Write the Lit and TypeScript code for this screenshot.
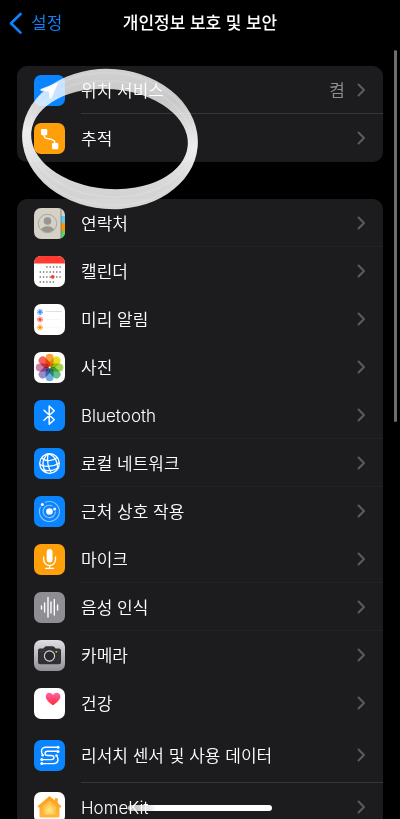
import { LitElement, html, css, svg, nothing } from "lit";
import { customElement } from "lit/decorators.js";

interface Row {
  label: string;
  icon: string;
  value?: string;
  tall?: boolean;
  line?: "strong" | "faint";
}

const locationRows: Row[] = [
  { label: "위치 서비스", icon: "location", value: "켬", line: "strong" },
  { label: "추적", icon: "tracking" },
];

const appRows: Row[] = [
  { label: "연락처", icon: "contacts", line: "faint" },
  { label: "캘린더", icon: "calendar" },
  { label: "미리 알림", icon: "reminders" },
  { label: "사진", icon: "photos" },
  { label: "Bluetooth", icon: "bluetooth", line: "faint" },
  { label: "로컬 네트워크", icon: "network", line: "faint" },
  { label: "근처 상호 작용", icon: "nearby" },
  { label: "마이크", icon: "mic", line: "faint" },
  { label: "음성 인식", icon: "speech", line: "faint" },
  { label: "카메라", icon: "camera" },
  { label: "건강", icon: "health" },
  { label: "리서치 센서 및 사용 데이터", icon: "research", tall: true, line: "strong" },
  { label: "HomeKit", icon: "home" },
];

const petals = ["#f9a03a", "#e8dc1e", "#a9d34e", "#62c08a", "#6cacdf", "#9c8bc8", "#cf7eac", "#f4625a"];

const tile = (fill: string) => svg`<rect width="31" height="31" rx="7" fill=${fill} />`;

const icons: Record<string, unknown> = {
  location: svg`${tile("#0a84ff")}
    <path d="M23.6 8 L7 14.4 Q6.200 15.200 7.200 15.600 L15 16 L16 23 Q16.600 24 17.200 23 Z" fill="#fff" stroke="#fff" stroke-width=".8" stroke-linejoin="round" />`,
  tracking: svg`${tile("#ff9f0a")}
    <path d="M10 9 C10 18 12.500 14.500 16 16 C20.500 17.500 21 17 21 23" fill="none" stroke="#fff" stroke-width="1.500" />
    <rect x="7" y="6" width="6.300" height="6.300" rx="1.300" fill="#fff" />
    <rect x="18" y="20" width="6.300" height="6.300" rx="1.300" fill="#fff" />`,
  contacts: svg`<defs>
      <clipPath id="book"><rect width="31" height="31" rx="7" /></clipPath>
      <clipPath id="face"><circle cx="13.500" cy="15.500" r="9" /></clipPath>
    </defs>
    <g clip-path="url(#book)">
      <rect width="31" height="31" fill="#d5d1c7" />
      <rect x="27" y="8" width="4" height="7" fill="#5ac8fa" />
      <rect x="27" y="15" width="4" height="8" fill="#ff9500" />
      <rect x="27" y="23" width="4" height="8" fill="#4cd964" />
      <path d="M27 0V31" stroke="#77756f" stroke-width=".8" />
      <g clip-path="url(#face)" fill="#999690"><circle cx="13.500" cy="13" r="3.800" /><ellipse cx="13.500" cy="22.500" rx="6.600" ry="4.300" /></g>
      <circle cx="13.500" cy="15.500" r="9.200" fill="none" stroke="#a5a29b" stroke-width=".9" />
    </g>`,
  calendar: svg`${tile("#fff")}
    <path d="M0 7.500V7a7 7 0 0 1 7-7h17a7 7 0 0 1 7 7v.5z" fill="#ff3b30" />
    <g stroke="#222" stroke-width="1.200" stroke-dasharray="1.300 2">
      <path d="M12.300 11H27" /><path d="M5.600 16H27" /><path d="M5.600 21H27" /><path d="M5.600 26H20" />
    </g>
    <circle cx="18.700" cy="20.800" r="1.900" fill="#ff3b30" />`,
  reminders: svg`${tile("#fff")}
    <g fill="none" stroke-width="1" stroke-dasharray="1.600 .6">
      <circle cx="6" cy="8" r="2.600" stroke="#3f9bff" /><circle cx="6" cy="15.500" r="2.600" stroke="#ff6a60" /><circle cx="6" cy="23.300" r="2.600" stroke="#ffad3b" />
    </g>
    <circle cx="6" cy="8" r="1.700" fill="#1684ff" /><circle cx="6" cy="15.500" r="1.700" fill="#ff453a" /><circle cx="6" cy="23.300" r="1.700" fill="#ff9500" />
    <path d="M11.500 7.500H28" stroke="#d8d8d8" stroke-width=".8" /><path d="M11.500 15.500H28M11.500 23.300H28" stroke="#f1f1f1" stroke-width=".6" />`,
  photos: svg`${tile("#fff")}
    <g class="petals">${petals.map(
      (c, i) => svg`<rect x="11.600" y="1.700" width="8" height="13" rx="4" fill=${c} transform=${`rotate(${i * 45} 15.600 15.500)`} />`
    )}</g>`,
  bluetooth: svg`${tile("#0a84ff")}
    <path d="M10 10.300 L20.300 19.800 L15.200 24.300 V6 L20.300 10.800 L10 20.300" fill="none" stroke="#fff" stroke-width="1.500" stroke-linejoin="round" stroke-linecap="round" />`,
  network: svg`${tile("#0a84ff")}
    <g fill="none" stroke="#fff" stroke-width="1.300">
      <circle cx="15.500" cy="15.500" r="9.800" />
      <path d="M14 5.700C7.500 11 7.500 20 13 25M14 5.700C20 7 24 13 23.500 21M14 5.700C13 12 14 20 17.500 25" />
      <path d="M7.500 10C12 14 19 13 23.300 9.500M5.800 16.500C11 19.500 20 18.500 25.200 15M8.300 22C13 23 20 22.500 24 20" />
    </g>`,
  nearby: svg`${tile("#0a84ff")}
    <g fill="none" stroke="#8dc6ff" stroke-width="1.100">
      <path d="M6.600 10.800A10 10 0 1 0 15.500 5.500Q12.800 5.400 10.800 6.600" />
      <path d="M21.500 15.500A6.200 6.200 0 1 1 18.500 10.100" />
    </g>
    <circle cx="15.500" cy="15.500" r="3.300" fill="#fff" /><circle cx="8.300" cy="8.500" r="1.500" fill="#fff" /><circle cx="20.700" cy="13" r="1.500" fill="#fff" />`,
  mic: svg`${tile("#ff9f0a")}
    <rect x="12.700" y="5" width="5.800" height="13.500" rx="2.900" fill="#fff" />
    <path d="M9.700 13V15.500A5.900 5.900 0 0 0 21.500 15.500V13M15.600 21.400V24.300M11.700 24.300H19.500" fill="none" stroke="#fff" stroke-width="1.300" stroke-linecap="round" />`,
  speech: svg`${tile("#8e8e93")}
    <path d="M7.500 14V17M10.600 11V20M14 5.500V25M17 10V21M20.300 7.500V23M23.600 13V18" stroke="#fff" stroke-width="1.400" stroke-linecap="round" />`,
  camera: svg`<defs><linearGradient id="silver" x2="0" y2="1"><stop stop-color="#dfdee4" /><stop offset="1" stop-color="#929197" /></linearGradient></defs>
    ${tile("url(#silver)")}
    <path d="M6 8.500H9.300L11 6.800Q11.500 6.300 12.300 6.300H18.800Q19.500 6.300 20 6.800L21.700 8.500H25Q27 8.500 27 10.500V22.300Q27 24.300 25 24.300H6Q4 24.300 4 22.300V10.500Q4 8.500 6 8.500Z" fill="#303033" />
    <path d="M4 11.300H27" stroke="#48484b" stroke-width=".6" />
    <circle cx="15.500" cy="16" r="5.100" fill="#29292c" stroke="#d6d6da" stroke-width="1.100" /><circle cx="22.300" cy="11.800" r=".9" fill="#ffcc00" />`,
  health: svg`<defs><linearGradient id="heart" x2="0" y2="1"><stop stop-color="#ff61ad" /><stop offset="1" stop-color="#ff2d2d" /></linearGradient></defs>
    ${tile("#fff")}
    <path d="M19 17.200C14.500 14 11.800 11.500 11.800 8.400C11.800 4.400 16.800 3.500 19 7C21.200 3.500 26.300 4.400 26.300 8.400C26.300 11.500 23.500 14 19 17.200Z" fill="url(#heart)" />`,
  research: svg`${tile("#0a84ff")}
    <g fill="none" stroke="#fff" stroke-width="1.400">
      <path d="M23.500 7.300H12Q7.500 7.300 7.500 11Q7.500 13 8.500 14.500" />
      <path d="M23.500 11.300H13.500Q11 11.300 11 13.500Q11 15.500 14 15.500H17Q20 15.500 20 17.500Q20 19.600 17.500 19.600H7.500" />
      <path d="M7.500 23.600H19Q24 23.600 24 19.500Q24 17 22.500 16" />
    </g>
    <g fill="#fff"><circle cx="24" cy="7.300" r="1.500" /><circle cx="24" cy="11.500" r="1.500" /><circle cx="7.800" cy="19.400" r="1.500" /><circle cx="7.800" cy="23.600" r="1.500" /><circle cx="22.500" cy="15.500" r="1.300" /><circle cx="8.700" cy="15.300" r="1.300" /></g>`,
  home: svg`<defs><linearGradient id="house" x2="0" y2="1"><stop stop-color="#ff9d1b" /><stop offset="1" stop-color="#ffb53c" /></linearGradient></defs>
    ${tile("#fff")}
    <path d="M15.500 4L20.800 8.500V6.300H23.800V11L27.500 14.300L26.600 15.600H25.500V24.500Q25.500 25.500 24.500 25.500H6.500Q5.500 25.500 5.500 24.500V15.600H4.400L3.500 14.300Z" fill="url(#house)" />
    <path d="M15.500 8.800L22.300 14.500V22.500H8.700V14.500Z" fill="#ffc04d" /><path d="M15.500 12L19.800 15.700V22.500H11.200V15.700Z" fill="#ffd264" /><path d="M15.500 14.800L17.700 16.800V20.500H13.300V16.800Z" fill="#ffe27c" />`,
};

@customElement("app-root")
export class AppRoot extends LitElement {
  static styles = css`
    :host {
      display: block;
      position: relative;
      height: 100vh;
      overflow: hidden;
      background: #000;
      color: #fff;
      font: 350 17px/24px Inter, "Noto Sans CJK KR", sans-serif;
    }
    .nav {
      display: grid;
      grid-template-columns: 1fr auto 1fr;
      align-items: center;
      height: 46px;
      margin-bottom: 20px;
      padding: 0 8px;
    }
    .title {
      margin: 0;
      font-size: 17px;
      font-weight: 500;
    }
    .back {
      display: flex;
      align-items: center;
      gap: 8px;
      color: #0a84ff;
      text-decoration: none;
    }
    .back-mark {
      width: 15px;
      height: 22px;
    }
    .card {
      margin: 0 17px 37px;
      padding: 0;
      list-style: none;
      border-radius: 10px;
      background: #1c1c1e;
      overflow: hidden;
    }
    .row {
      display: flex;
      align-items: center;
      gap: 16px;
      height: 48px;
      padding-left: 17px;
      color: inherit;
      text-decoration: none;
    }
    .tall {
      height: 56px;
    }
    .icon {
      flex: none;
      width: 31px;
      height: 31px;
    }
    .petals rect {
      mix-blend-mode: multiply;
    }
    .body {
      box-sizing: border-box;
      flex: 1;
      display: flex;
      align-items: center;
      gap: 12px;
      height: 100%;
      padding-right: 17px;
      border-bottom: 1px solid transparent;
    }
    .strong {
      border-color: #363639;
    }
    .faint {
      border-color: #222224;
    }
    .label,
    .value {
      padding-top: 2px;
    }
    .label {
      flex: 1;
    }
    .value {
      color: #8e8e93;
    }
    .chevron {
      width: 9px;
      height: 14px;
    }
    .scrollbar {
      position: absolute;
      top: 50px;
      right: 3px;
      width: 3px;
      height: 372px;
      border-radius: 2px;
      background: #6e6e70;
    }
    .ring {
      position: absolute;
      top: 64px;
      left: 17px;
      width: 186px;
      height: 150px;
      pointer-events: none;
    }
    .home-bar {
      position: absolute;
      bottom: 8px;
      left: 50%;
      width: 144px;
      height: 6px;
      border-radius: 3px;
      background: linear-gradient(90deg, #ffffffaa, #fff 20%);
      transform: translateX(-50%);
    }
  `;

  private row(r: Row) {
    return html`<li>
      <a class="row ${r.tall ? "tall" : ""}" href="#">
        <svg class="icon" viewBox="0 0 31 31" aria-hidden="true">${icons[r.icon]}</svg>
        <span class="body ${r.line ?? ""}">
          <span class="label">${r.label}</span>
          ${r.value ? html`<span class="value">${r.value}</span>` : nothing}
          <svg class="chevron" viewBox="0 0 9 14" aria-hidden="true">
            <path d="M1.500 1.500L7 7L1.500 12.500" fill="none" stroke="#5c5c60" stroke-width="2" stroke-linecap="round" stroke-linejoin="round" />
          </svg>
        </span>
      </a>
    </li>`;
  }

  render() {
    return html`
      <header class="nav">
        <a class="back" href="#">
          <svg class="back-mark" viewBox="0 0 15 22" aria-hidden="true">
            <path d="M12.500 2L3 11.300L12.500 20.600" fill="none" stroke="#0a84ff" stroke-width="2.600" stroke-linecap="round" stroke-linejoin="round" />
          </svg>
          <span>설정</span>
        </a>
        <h1 class="title">개인정보 보호 및 보안</h1>
      </header>
      <main>
        <ul class="card">${locationRows.map((r) => this.row(r))}</ul>
        <ul class="card">${appRows.map((r) => this.row(r))}</ul>
      </main>
      <svg class="ring" viewBox="17 64 186 150" aria-hidden="true">
        <defs>
          <linearGradient id="brush" x2="0" y2="1">
            <stop stop-color="#fff" stop-opacity=".8" />
            <stop offset=".2" stop-color="#fff" stop-opacity=".76" />
            <stop offset=".5" stop-color="#fff" stop-opacity=".92" />
            <stop offset=".8" stop-color="#fff" stop-opacity=".84" />
            <stop offset="1" stop-color="#fff" stop-opacity=".82" />
          </linearGradient>
        </defs>
        <g transform="rotate(5 110 139)">
          <path fill="url(#brush)" fill-rule="evenodd" d="M22 139A88 70 0 1 1 198 139A88 70 0 1 1 22 139ZM31 139A78.500 50 0 1 0 188 139A78.500 50 0 1 0 31 139Z" />
          <g fill="none" stroke="#fff" stroke-opacity=".12" stroke-width="2">
            <ellipse cx="110" cy="139" rx="86" ry="66" />
            <ellipse cx="110" cy="139" rx="83" ry="58" />
          </g>
        </g>
      </svg>
      <div class="scrollbar"></div>
      <div class="home-bar"></div>
    `;
  }
}
